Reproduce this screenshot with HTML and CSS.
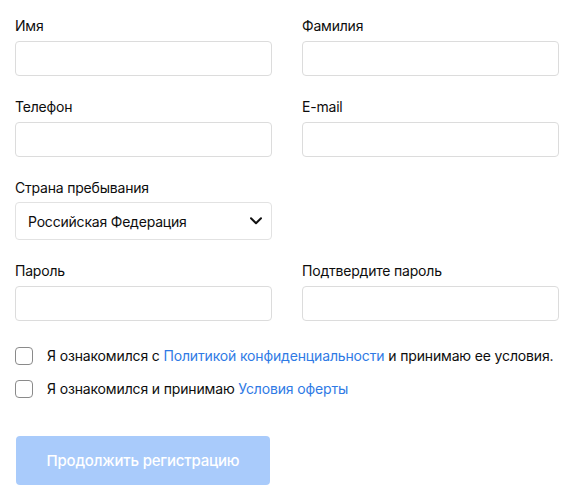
FILE: index.html
```html
<!DOCTYPE html>
<html lang="ru">
<head>
    <meta charset="UTF-8">
    <meta name="viewport" content="width=device-width, initial-scale=1.0">
    <title>Регистрация</title>
    <link rel="stylesheet" href="styles.css">
</head>
<body>
    <form class="register" id="registerForm">
        <div class="fields">
            <div class="field">
                <label for="first_name">Имя</label>
                <input type="text" id="first_name" name="first_name">
            </div>
            <div class="field">
                <label for="last_name">Фамилия</label>
                <input type="text" id="last_name" name="last_name">
            </div>

            <div class="field">
                <label for="phone">Телефон</label>
                <input type="tel" id="phone" name="phone">
            </div>
            <div class="field">
                <label for="email">E-mail</label>
                <input type="email" id="email" name="email">
            </div>

            <div class="field">
                <label for="country">Страна пребывания</label>
                <div class="select">
                    <span class="select-value">Российская Федерация</span>
                    <svg class="chevron" width="12" height="8" viewBox="0 0 12 8">
                        <path d="M1 1.2 L6 6.2 L11 1.2" fill="none" stroke="#111" stroke-width="2" stroke-linecap="round" stroke-linejoin="round"/>
                    </svg>
                </div>
            </div>
            <div class="field empty"></div>

            <div class="field">
                <label for="password">Пароль</label>
                <input type="password" id="password" name="password">
            </div>
            <div class="field">
                <label for="password2">Подтвердите пароль</label>
                <input type="password" id="password2" name="password2">
            </div>
        </div>

        <div class="agree">
            <label class="check">
                <input type="checkbox" name="privacy">
                <span class="box"></span>
                <span>Я ознакомился с <a href="#">Политикой конфиденциальности</a> и принимаю ее условия.</span>
            </label>
            <label class="check">
                <input type="checkbox" name="offer">
                <span class="box"></span>
                <span>Я ознакомился и принимаю <a href="#">Условия оферты</a></span>
            </label>
        </div>

        <button type="button" class="submit" disabled>Продолжить регистрацию</button>
    </form>
</body>
</html>
```

FILE: styles.css
```css
body {
    font-family: 'Inter', 'Noto Sans', sans-serif;
    background: #ffffff;
    margin: 0;
    padding: 0;
    color: #0d0d0d;
    letter-spacing: -0.2px;
}

.register {
    padding: 16px 20px 0 15px;
    width: 544px;
}

.fields {
    display: grid;
    grid-template-columns: 257px 257px;
    column-gap: 30px;
    row-gap: 21px;
}

.field label {
    display: block;
    font-size: 14px;
    line-height: 20px;
    margin-bottom: 5px;
}

.field input {
    display: block;
    box-sizing: border-box;
    width: 100%;
    height: 35px;
    margin: 0;
    padding: 0 12px;
    font-family: inherit;
    font-size: 14px;
    border: 1px solid #dcdcdc;
    border-radius: 4px;
    outline: none;
}

.field input:focus {
    border-color: #2f7ae5;
}

.select {
    box-sizing: border-box;
    height: 38px;
    margin-top: -1px;
    padding: 0 8px 0 12px;
    border: 1px solid #e2e2e2;
    border-radius: 4px;
    display: flex;
    align-items: center;
    justify-content: space-between;
    font-size: 14px;
}

.chevron {
    margin-right: 1px;
}

.agree {
    margin-top: 26px;
    display: flex;
    flex-direction: column;
    gap: 15px;
}

.check {
    display: flex;
    align-items: center;
    font-size: 14px;
    line-height: 18px;
    white-space: nowrap;
    letter-spacing: -0.15px;
    cursor: pointer;
}

.check input {
    display: none;
}

.check .box {
    box-sizing: border-box;
    width: 18px;
    height: 18px;
    border: 1px solid #8a8a8a;
    border-radius: 4px;
    margin-right: 14px;
    flex-shrink: 0;
}

.check a {
    color: #2f7ae5;
    text-decoration: none;
}

.submit {
    margin-top: 38px;
    margin-left: 1px;
    width: 254px;
    height: 49px;
    border: none;
    border-radius: 4px;
    background-color: #a9cbfb;
    color: #ffffff;
    font-family: inherit;
    font-size: 15px;
    font-weight: 500;
    letter-spacing: -0.2px;
    cursor: pointer;
}
```
